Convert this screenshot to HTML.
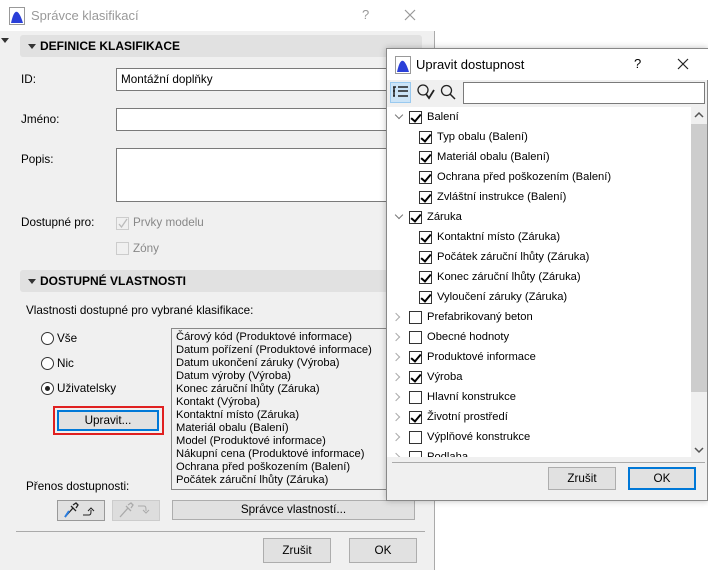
<!DOCTYPE html>
<html><head><meta charset="utf-8"><style>
*{box-sizing:border-box;margin:0;padding:0}
body{width:708px;height:570px;position:relative;background:#fff;font-family:"Liberation Sans",sans-serif;font-size:11.7px;color:#000;overflow:hidden}
.a{position:absolute}
.hdr{background:#e1e1e1;border-radius:3px;font-weight:bold;font-size:12px;padding-left:20px;line-height:22px}
.hdr:before{content:"";position:absolute;left:8px;top:9px;border:4px solid transparent;border-top:5px solid #333;border-bottom:0}
.inp{background:#fff;border:1px solid #7a7a7a}
.btn{background:#e1e1e1;border:1px solid #adadad;text-align:center}
.cb{width:13px;height:13px;border:1px solid #333;background:#fff}
.cb.c:after{content:"";position:absolute;left:3px;top:0px;width:4px;height:8px;border:solid #000;border-width:0 2px 2px 0;transform:rotate(40deg)}
.rad{width:13px;height:13px;border:1px solid #333;border-radius:50%;background:#fff}
.row{position:absolute;height:20px;line-height:20px;white-space:nowrap;font-size:11.2px}
.chev{position:absolute;width:6px;height:6px;border:solid #777;border-width:0 1.5px 1.5px 0}
</style></head><body>
<div class="a" style="left:0;top:0;width:435px;height:570px;background:#f0f0f0;border-right:1px solid #aaa"></div>
<div class="a" style="left:0;top:0;width:435px;height:31px;background:#fff"></div>
<svg class="a" style="left:9px;top:7px" width="16" height="18"><rect x="0.5" y="0.5" width="15" height="17" fill="#fff" stroke="#999"/><path d="M2 16 C5 2 9 0 14 16Z" fill="#2a3fd8"/></svg>
<div class="a" style="left:31px;top:8px;font-size:13px;color:#999">Správce klasifikací</div>
<div class="a" style="left:362px;top:7px;font-size:13px;color:#999">?</div>
<svg class="a" style="left:404px;top:9px" width="12" height="12"><path d="M1 1L11 11M11 1L1 11" stroke="#999" stroke-width="1.2"/></svg>
<div class="a" style="left:1px;top:38px;border:4px solid transparent;border-top:5px solid #333"></div>
<div class="a hdr" style="left:20px;top:35px;width:402px;height:22px">DEFINICE KLASIFIKACE</div>
<div class="a" style="left:21px;top:73px">ID:</div>
<div class="a inp" style="left:116px;top:68px;width:290px;height:23px;padding:4px 4px">Montážní doplňky</div>
<div class="a" style="left:21px;top:113px">Jméno:</div>
<div class="a inp" style="left:116px;top:108px;width:290px;height:23px"></div>
<div class="a" style="left:21px;top:153px">Popis:</div>
<div class="a inp" style="left:116px;top:148px;width:290px;height:54px"></div>
<div class="a" style="left:21px;top:216px">Dostupné pro:</div>
<div class="a" style="left:116px;top:217px;width:13px;height:13px;border:1px solid #ccc;background:#f0f0f0"></div>
<svg class="a" style="left:117px;top:218px" width="11" height="11"><path d="M2 6L4.5 9L10 1" stroke="#bbb" fill="none" stroke-width="1.3"/></svg>
<div class="a" style="left:133px;top:216px;color:#888">Prvky modelu</div>
<div class="a" style="left:116px;top:242px;width:13px;height:13px;border:1px solid #ccc;background:#f0f0f0"></div>
<div class="a" style="left:133px;top:242px;color:#888">Zóny</div>
<div class="a hdr" style="left:20px;top:270px;width:402px;height:22px">DOSTUPNÉ VLASTNOSTI</div>
<div class="a" style="left:26px;top:304px">Vlastnosti dostupné pro vybrané klasifikace:</div>
<div class="a rad" style="left:41px;top:332px"></div><div class="a" style="left:57px;top:332px">Vše</div>
<div class="a rad" style="left:41px;top:357px"></div><div class="a" style="left:57px;top:357px">Nic</div>
<div class="a rad" style="left:41px;top:382px"></div><div class="a" style="left:45px;top:386px;width:5px;height:5px;border-radius:50%;background:#222"></div><div class="a" style="left:57px;top:382px">Uživatelsky</div>
<div class="a" style="left:53px;top:406px;width:111px;height:29px;border:2px solid #e02020"></div>
<div class="a btn" style="left:57px;top:410px;width:102px;height:21px;border:2px solid #0078d7;line-height:17px">Upravit...</div>
<div class="a" style="left:171px;top:328px;width:250px;height:162px;background:#f0f0f0;border:1px solid #888;padding:2px 4px;line-height:13px;white-space:nowrap;font-size:11.2px">Čárový kód (Produktové informace)<br>Datum pořízení (Produktové informace)<br>Datum ukončení záruky (Výroba)<br>Datum výroby (Výroba)<br>Konec záruční lhůty (Záruka)<br>Kontakt (Výroba)<br>Kontaktní místo (Záruka)<br>Materiál obalu (Balení)<br>Model (Produktové informace)<br>Nákupní cena (Produktové informace)<br>Ochrana před poškozením (Balení)<br>Počátek záruční lhůty (Záruka)</div>
<div class="a" style="left:26px;top:480px">Přenos dostupnosti:</div>
<div class="a btn" style="left:57px;top:500px;width:48px;height:21px;border-color:#999"></div>
<svg class="a" style="left:62px;top:502px" width="40" height="17"><path d="M3 15L11 6M9 4l5 5M11 3l3-2 2 2-2 3" stroke="#222" fill="none" stroke-width="1.3"/><path d="M3 15l4-6" stroke="#2a7de0" stroke-width="2"/><path d="M21 13h6c2 0 2-2 2-5M26 9l3-3 3 3" stroke="#222" fill="none"/></svg>
<div class="a" style="left:112px;top:500px;width:48px;height:21px;background:#ddd;border:1px solid #ccc"></div>
<svg class="a" style="left:117px;top:502px" width="40" height="17"><path d="M3 15L11 6M9 4l5 5M11 3l3-2 2 2-2 3" stroke="#aaa" fill="none" stroke-width="1.3"/><path d="M21 4h6c2 0 2 2 2 5M26 8l3 3 3-3" stroke="#aaa" fill="none"/></svg>
<div class="a btn" style="left:172px;top:500px;width:243px;height:20px;line-height:18px">Správce vlastností...</div>
<div class="a" style="left:16px;top:531px;width:409px;height:1px;background:#aaa"></div>
<div class="a btn" style="left:263px;top:538px;width:68px;height:25px;line-height:23px">Zrušit</div>
<div class="a btn" style="left:349px;top:538px;width:68px;height:25px;line-height:23px">OK</div>

<div class="a" style="left:386px;top:48px;width:322px;height:453px;background:#f0f0f0;border:1px solid #888;box-shadow:0 0 6px rgba(0,0,0,.25)"></div>
<div class="a" style="left:387px;top:49px;width:321px;height:31px;background:#fff"></div>
<svg class="a" style="left:395px;top:56px" width="16" height="18"><rect x="0.5" y="0.5" width="15" height="17" fill="#fff" stroke="#999"/><path d="M2 16 C5 2 9 0 14 16Z" fill="#2a3fd8"/></svg>
<div class="a" style="left:416px;top:57px;font-size:13px">Upravit dostupnost</div>
<div class="a" style="left:634px;top:56px;font-size:13px">?</div>
<svg class="a" style="left:677px;top:58px" width="12" height="12"><path d="M1 1L11 11M11 1L1 11" stroke="#222" stroke-width="1.2"/></svg>
<div class="a" style="left:390px;top:82px;width:21px;height:21px;background:#cce4f7;border:1px solid #99c9ef"></div>
<svg class="a" style="left:392px;top:85px" width="17" height="15"><path d="M1 2h3M1 6h2M1 11h2M2 2v9M6 2h10M6 6h10M6 11h10" stroke="#222" stroke-width="1.5"/></svg>
<svg class="a" style="left:416px;top:83px" width="20" height="20"><circle cx="7" cy="7" r="5" stroke="#222" fill="none" stroke-width="1.3"/><path d="M10 11l3 4 5-8" stroke="#222" fill="none" stroke-width="1.8"/></svg>
<svg class="a" style="left:440px;top:84px" width="16" height="16"><circle cx="6.5" cy="6.5" r="5" stroke="#222" fill="none" stroke-width="1.3"/><path d="M10 10l5 5" stroke="#222" stroke-width="1.5"/></svg>
<div class="a inp" style="left:463px;top:82px;width:242px;height:22px"></div>
<div class="a" style="left:387px;top:107px;width:305px;height:350px;background:#fff;overflow:hidden">
<div id="tree"></div>
</div>
<div class="a" style="left:691px;top:107px;width:16px;height:350px;background:#f0f0f0"></div>
<div class="a" style="left:691px;top:124px;width:16px;height:268px;background:#cdcdcd"></div>
<svg class="a" style="left:694px;top:110px" width="10" height="10"><path d="M1 7l4-4 4 4" stroke="#555" fill="none" stroke-width="1.5"/></svg>
<svg class="a" style="left:694px;top:445px" width="10" height="10"><path d="M1 3l4 4 4-4" stroke="#555" fill="none" stroke-width="1.5"/></svg>
<div class="a" style="left:392px;top:462px;width:313px;height:1px;background:#aaa"></div>
<div class="a btn" style="left:548px;top:467px;width:68px;height:23px;line-height:21px">Zrušit</div>
<div class="a btn" style="left:628px;top:467px;width:68px;height:23px;line-height:19px;border:2px solid #0078d7">OK</div>
<script>
var rows=[[0,1,1,"Balení"],[1,0,1,"Typ obalu (Balení)"],[1,0,1,"Materiál obalu (Balení)"],[1,0,1,"Ochrana před poškozením (Balení)"],[1,0,1,"Zvláštní instrukce (Balení)"],[0,1,1,"Záruka"],[1,0,1,"Kontaktní místo (Záruka)"],[1,0,1,"Počátek záruční lhůty (Záruka)"],[1,0,1,"Konec záruční lhůty (Záruka)"],[1,0,1,"Vyloučení záruky (Záruka)"],[0,2,0,"Prefabrikovaný beton"],[0,2,0,"Obecné hodnoty"],[0,2,1,"Produktové informace"],[0,2,1,"Výroba"],[0,2,0,"Hlavní konstrukce"],[0,2,1,"Životní prostředí"],[0,2,0,"Výplňové konstrukce"],[0,2,0,"Podlaha"]];
var h="";rows.forEach(function(r,i){var y=i*20;var cx=r[0]?32:22;
if(r[1]==1)h+='<div class="chev" style="left:9px;top:'+(y+5)+'px;transform:rotate(45deg)"></div>';
if(r[1]==2)h+='<div class="chev" style="left:6px;top:'+(y+7)+'px;transform:rotate(-45deg);border-color:#aaa"></div>';
h+='<div class="a cb'+(r[2]?' c':'')+'" style="left:'+cx+'px;top:'+(y+4)+'px"></div>';
h+='<div class="row" style="left:'+(cx+18)+'px;top:'+y+'px">'+r[3]+'</div>';});
document.getElementById("tree").innerHTML=h;
</script>
</body></html>
